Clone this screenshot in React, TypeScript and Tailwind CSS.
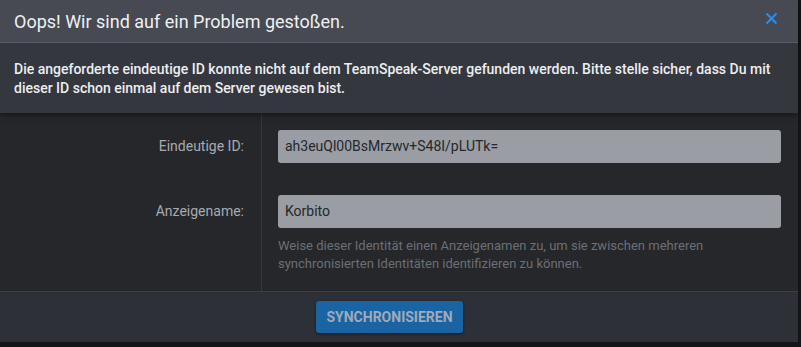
const fields = [
  { label: "Eindeutige ID:", value: "ah3euQl00BsMrzwv+S48I/pLUTk=" },
  { label: "Anzeigename:", value: "Korbito" },
];

const App = () => {
  return (
    <div className="h-[347px] w-[801px] overflow-hidden bg-[#141518] font-['Roboto',sans-serif]">
      <div className="flex w-[798px] flex-col">
        <div className="relative z-10 shadow-[0_2px_6px_rgba(0,0,0,0.5)]">
          <div className="flex h-[43px] items-center justify-between border-b border-[#5a5d65] bg-[#474a53] pl-[14px] pr-[20px]">
            <span className="text-[18px] text-[#eef0f3]">
              Oops! Wir sind auf ein Problem gestoßen.
            </span>
            <svg width="13" height="13" viewBox="0 0 13 13" className="mt-[-6px]">
              <path
                d="M1.5 1.5 L11.5 11.5 M11.5 1.5 L1.5 11.5"
                stroke="#2f8fe6"
                strokeWidth="1.8"
                fill="none"
              />
            </svg>
          </div>
          <div className="bg-[#35373e] px-[14px] pb-[15px] pt-[17px] text-[14px] font-medium leading-[19px] text-[#eceef1]">
            Die angeforderte eindeutige ID konnte nicht auf dem TeamSpeak-Server
            gefunden werden. Bitte stelle sicher, dass Du mit dieser ID schon
            einmal auf dem Server gewesen bist.
          </div>
        </div>

        <div className="flex bg-[#25272b]">
          <div className="flex w-[262px] flex-col gap-[32px] border-r border-[#35373c] pr-[17px] pt-[17px]">
            {fields.map((f) => (
              <div
                key={f.label}
                className="flex h-[33px] items-center justify-end text-[14px] text-[#a8aab0]"
              >
                {f.label}
              </div>
            ))}
          </div>
          <div className="flex flex-1 flex-col pb-[18px] pl-[16px] pr-[17px] pt-[17px]">
            <div className="flex h-[33px] items-center rounded-[3px] bg-[#9a9da4] px-[7px] text-[14px] text-[#25272b]">
              {fields[0].value}
            </div>
            <div className="mt-[32px] flex h-[33px] items-center rounded-[3px] bg-[#9a9da4] px-[7px] text-[14px] text-[#25272b]">
              {fields[1].value}
            </div>
            <p className="mt-[9px] text-[13px] leading-[18px] text-[#6c6f75]">
              Weise dieser Identität einen Anzeigenamen zu, um sie zwischen mehreren
              <br />
              synchronisierten Identitäten identifizieren zu können.
            </p>
          </div>
        </div>

        <div className="flex h-[51px] items-center border-t border-[#3b3e45] bg-[#2e3038] pl-[316px]">
          <button className="h-[32px] w-[147px] rounded-[3px] bg-[#1a64a3] text-[14px] font-bold text-[#9eabbb] shadow-[0_1px_3px_rgba(0,0,0,0.5)]">
            SYNCHRONISIEREN
          </button>
        </div>
      </div>
    </div>
  );
};

export default App;
